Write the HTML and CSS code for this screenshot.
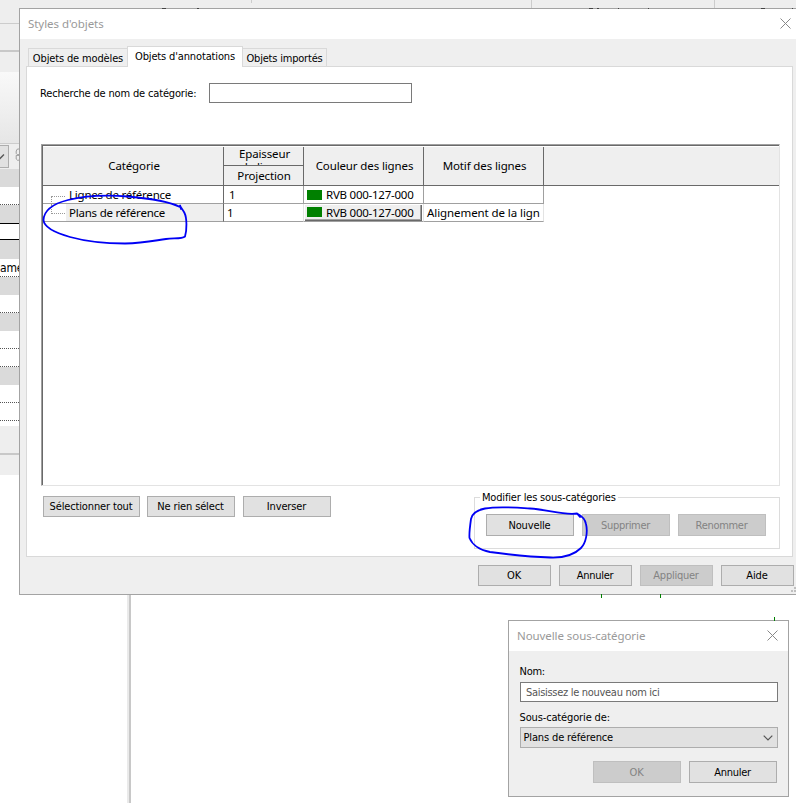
FILE: index.html
```html
<!DOCTYPE html>
<html lang="fr">
<head>
<meta charset="utf-8">
<title>Styles d'objets</title>
<link rel="stylesheet" href="styles.css">
</head>
<body>
<div class="desktop">
  <div class="ribbon"><i class="sep s1"></i><i class="sep s2"></i><i class="sep s3"></i></div>
  <div class="palette">
    <div class="p-top"></div>
    <div class="p-bar"></div>
    <div class="p-preview"></div>
    <div class="p-type"><span class="p-drop"><svg width="8" height="22" viewBox="0 0 8 22"><path d="M-1 13.5l5-5" fill="none" stroke="#555" stroke-width="1.3"/></svg></span><svg class="p-icon" width="5" height="16" viewBox="0 0 5 16"><path d="M5 .5H3L1.500 3V6L3 7.500H5M5 8.500H1.500V13L3 14.500H5" fill="none" stroke="#8c8c8c"/></svg></div>
    <div class="p-row head"></div>
    <div class="p-row dot"></div>
    <div class="p-row head"></div>
    <div class="p-row focus"></div>
    <div class="p-row head tall"></div>
    <div class="p-row dot">amé</div>
    <div class="p-row head"></div>
    <div class="p-row dot"></div>
    <div class="p-row head"></div>
    <div class="p-row dot"></div>
    <div class="p-row dot"></div>
    <div class="p-row head"></div>
    <div class="p-row dot"></div>
    <div class="p-row dot"></div>
    <div class="p-row gap"></div>
    <div class="p-foot"></div>
    <div class="p-end"></div>
  </div>
  <div class="divider"></div>
  <i class="tick k1"></i><i class="tick k2"></i><i class="tick k3"></i>

  <section class="window main">
    <header class="titlebar"><span class="tt1">Styles d'objets</span>
      <svg class="close" width="11" height="11" viewBox="0 0 11 11"><path d="M.5.5l10 10M10.500.5l-10 10" fill="none" stroke="#888"/></svg></header>
    <div class="tabs">
      <div class="tab first">Objets de modèles</div>
      <div class="tab active">Objets d'annotations</div>
      <div class="tab third">Objets importés</div>
    </div>
    <div class="panel">
      <div class="search"><label>Recherche de nom de catégorie:</label><div class="field"></div></div>
      <div class="grid">
        <div class="ghead">
          <div class="gh c1">Catégorie</div>
          <div class="gsplit c2"><div class="gtop">Epaisseur<br><span class="clip">de lignes</span></div><div class="gbot">Projection</div></div>
          <div class="gh c3">Couleur des lignes</div>
          <div class="gh c4">Motif des lignes</div>
          <div class="rest"></div>
        </div>
        <div class="grow">
          <div class="cell c1"><i class="branch top"></i><span class="name">Lignes de référence</span></div>
          <div class="cell c2 num">1</div>
          <div class="cell c3"><span class="color"><i></i>RVB 000-127-000</span></div>
          <div class="cell c4"></div>
        </div>
        <div class="grow sel">
          <div class="cell c1"><i class="branch"></i><span class="name">Plans de référence</span></div>
          <div class="cell c2 num">1</div>
          <div class="cell c3"><span class="color raised"><i></i>RVB 000-127-000</span></div>
          <div class="cell c4 motif">Alignement de la lign</div>
        </div>
      </div>
      <div class="actions">
        <div class="btn wide">Sélectionner tout</div>
        <div class="btn n">Ne rien sélect</div>
        <div class="btn n inv">Inverser</div>
        <fieldset class="group"><legend>Modifier les sous-catégories</legend>
          <div class="btn n tall">Nouvelle</div>
          <div class="btn n tall off t3">Supprimer</div>
          <div class="btn n tall off t3">Renommer</div>
        </fieldset>
      </div>
    </div>
    <footer class="foot">
      <div class="btn">OK</div>
      <div class="btn t2">Annuler</div>
      <div class="btn off t2">Appliquer</div>
      <div class="btn">Aide</div>
    </footer>
    <svg class="grip" width="6" height="6" viewBox="0 0 6 6"><path d="M4 0h2v2h-2zM1 3h2v2h-2zM4 3h2v2h-2z" fill="#bfbfbf"/></svg>
  </section>
  <svg class="ink" width="796" height="12" viewBox="0 0 796 12"><path d="M162 8.500h4M197 8.500h2M589 8.500h4M597 8.500h2M618 8.500h1M648 8.500h1M761 8.500h4M792 8.500h1" stroke="#444" fill="none"/></svg>

  <svg class="ink" width="600" height="390" viewBox="0 0 600 390">
    <path d="M180 207C168 201 145 198 128 196.500C108 195 86 195.500 68 200C52 204 44 211 43.500 220C44 228 56 233 70 237C88 242 105 243.500 125 243.500C143 243 152 241 166 239C174 238 182 239 185 236.500C187 230 187 218 184.500 213C183 210 181 208 180 205.500L181 209" fill="none" stroke="#0000f5" stroke-width="1.8" stroke-linecap="round" stroke-linejoin="round"/>
  </svg>
  <svg class="ink low" width="140" height="70" viewBox="460 495 140 70">
    <path d="M577 513.500C563 515.500 548 509.500 530 508.500C516 507.500 498 506 485 508.500C477 510 472 514 471 519C470 526 469 533 469.500 538C472 544 479 550 490 552C512 555 530 557 550 557.500C562 558 574 555 581 548C586 543 588 532 586 524C585 519 582 516 577 513.500L580 517" fill="none" stroke="#0000f5" stroke-width="1.8" stroke-linecap="round" stroke-linejoin="round"/>
  </svg>

  <section class="window sub">
    <header class="titlebar"><span class="tt2">Nouvelle sous-catégorie</span>
      <svg class="close" width="11" height="11" viewBox="0 0 11 11"><path d="M.5.5l10 10M10.500.5l-10 10" fill="none" stroke="#888"/></svg></header>
    <div class="form">
      <label class="t2">Nom:</label>
      <div class="field t3">Saisissez le nouveau nom ici</div>
      <label>Sous-catégorie de:</label>
      <div class="select">Plans de référence<svg width="10" height="6" viewBox="0 0 10 6"><path d="M.7.7L5 5 9.300.7" fill="none" stroke="#555" stroke-width="1.2"/></svg></div>
      <div class="buttons"><div class="btn n tall off">OK</div><div class="btn n tall t2">Annuler</div></div>
    </div>
  </section>
</div>
</body>
</html>
```
FILE: styles.css
```css
* { box-sizing: border-box; }
body { margin: 0; background: #fff; color: #000; font: 11px/14px "DejaVu Sans Condensed", "Liberation Sans", sans-serif; letter-spacing: -.14px; }
.desktop { position: relative; width: 796px; height: 803px; overflow: hidden; white-space: nowrap; }

/* application behind the dialogs */
.ribbon { position: absolute; left: 0; top: 0; width: 796px; height: 9px; background: #eee; }
.sep { position: absolute; top: 0; width: 1px; height: 8px; background: #ccc; }
.s1 { left: 251px; height: 3px; }
.s2 { left: 531px; }
.s3 { left: 714px; }
.palette { position: absolute; left: 0; top: 0; width: 19px; }
.p-top { height: 51px; background: linear-gradient(#eee 23px, #ccc 23px, #ccc 24px, #eee 24px, #eee 50px, #c8c8c8 50px); }
.p-bar { height: 21px; background: linear-gradient(#c8c8c8 1px, #eee 1px); }
.p-preview { height: 72px; background: linear-gradient(#f9f9f9, #e6e6e6); border-bottom: 1px solid #ccc; }
.p-type { display: flex; height: 25px; padding-top: 1px; gap: 6px; background: #eee; }
.p-drop { width: 9px; height: 23px; background: #e1e1e1; border: 1px solid #adadad; border-left: 0; }
.p-drop svg { display: block; }
.p-icon { margin-top: 2px; width: 4px; }
.p-row { height: 18px; }
.p-row.head { background: #dadada; }
.p-row.head.tall { height: 19px; }
.p-row.dot { padding-top: 2px; font-size: 12px; background: repeating-linear-gradient(90deg, #555 0 1px, #fff 1px 2px) bottom / 100% 1px no-repeat; }
.p-row.focus { height: 17px; border: solid #000; border-width: 1px 0; }
.p-row.gap { height: 5px; }
.p-foot { height: 29px; background: #eee; border-bottom: 2px solid #c8c8c8; }
.p-end { height: 20px; background: #eee; }
.divider { position: absolute; left: 127px; top: 595px; width: 4px; height: 208px; border-left: 2px solid #eaeaea; background: #c8c8c8; }
.tick { position: absolute; width: 1px; height: 4px; background: #008000; z-index: 1; }
.k1 { left: 601px; top: 594px; }
.k2 { left: 660px; top: 594px; }
.k3 { left: 774px; top: 617px; }

/* shared window parts */
.window { position: absolute; background: #efefef; border: 1px solid #a3a3a3; }
.titlebar { display: flex; justify-content: space-between; height: 30px; background: #fff; color: #999; font: 11.5px/30px "Noto Sans", sans-serif; letter-spacing: -.05px; }
.close { margin-top: 9px; }
.btn { display: flex; align-items: center; justify-content: center; height: 21px; padding: 1px 1px 0 0; background: #e1e1e1; border: 1px solid #adadad; flex: none; }
.btn.n { width: 88px; }
.btn.tall { height: 22px; padding-top: 2px; }
.btn.off { background: #ccc; border-color: #bfbfbf; color: #838383; }
.t2 { letter-spacing: -.25px; }
.t3 { letter-spacing: -.3px; }

/* main dialog */
.main { left: 19px; top: 8px; width: 790px; height: 587px; }
.main .titlebar { width: 777px; padding: 0 6px 0 8px; }
.tabs { display: flex; align-items: flex-end; height: 27px; margin-left: 8px; position: relative; }
.tab { height: 18px; border: 1px solid #d9d9d9; border-bottom: 0; line-height: 20px; text-align: center; }
.tab.first { width: 99px; border-right: 0; }
.tab.active { width: 116px; height: 21px; line-height: 19px; background: #fff; margin-bottom: -1px; }
.tab.third { width: 84px; border-left: 0; letter-spacing: -.2px; }
.panel { width: 767px; height: 491px; margin-left: 6px; background: #fff; border: 1px solid #d9d9d9; }
.search { display: flex; height: 20px; margin: 16px 0 0 13px; letter-spacing: -.16px; }
.search label { width: 169px; padding-top: 4px; }
.search .field { width: 203px; height: 20px; border: 1px solid #7a7a7a; }

.grid { width: 739px; height: 342px; margin: 41px 0 0 14px; border: 1px solid #a0a0a0; border-right-color: #e3e3e3; border-bottom-color: #e3e3e3; box-shadow: inset 1px 1px #696969; padding: 2px 0 0 1px; font: 11.5px/14px "Noto Sans", sans-serif; letter-spacing: -.12px; }
.ghead { display: flex; height: 40px; margin-top: -1px; padding-top: 1px; }
.ghead > div { background: #efefef; border-bottom: 1px solid #696969; border-right: 1px solid #696969; }
.ghead > .rest { flex: 1; border-right: 0; }
.c1 { width: 181px; }
.c2 { width: 80px; }
.c3, .c4 { width: 120px; }
.gh { display: flex; align-items: center; justify-content: center; padding: 0 0 1px 2px; }
.gsplit { text-align: center; padding-left: 1px; }
.gtop { height: 19px; margin-left: -1px; padding-left: 2px; overflow: hidden; border-bottom: 1px solid #696969; line-height: 14px; }
.clip { position: relative; top: -1px; }
.gbot { line-height: 20px; }
.grow { display: flex; height: 18px; }
.cell { display: flex; align-items: center; border: solid #a0a0a0; border-width: 0 1px 1px 0; overflow: hidden; }
.grow .c1 { padding-left: 8px; border-right-color: #696969; }
.branch { width: 15px; height: 8px; margin-top: 10px; border-left: 1px dotted #999; background: repeating-linear-gradient(90deg, #999 0 1px, #fff 1px 2px) 0 0 / 100% 1px no-repeat; flex: none; }
.sel .branch { height: 10px; margin: 0 0 7px; background-position: 0 9px; }
.name { flex: 1; padding-left: 3px; line-height: 17px; letter-spacing: -.22px; }
.sel .name { background: #efefef; }
.num { padding-left: 5px; }
.sel .num { padding-left: 3px; }
.color { display: flex; align-items: center; width: 117px; height: 17px; margin-left: 1px; padding-left: 2px; letter-spacing: -.24px; }
.color i { width: 15px; height: 10px; margin-right: 4px; background: #008000; }
.raised { background: #efefef; border: solid #696969; border-width: 0 1px 1px 0; height: 16px; padding-top: 1px; box-shadow: inset -1px -1px #a0a0a0; }
.raised i { margin-top: -2px; }
.sel .cell { border-right-color: #e3e3e3; }
.sel .c1 { border-right-color: #696969; }
.motif { padding-left: 3px; letter-spacing: -.08px; }

.actions { display: flex; align-items: flex-start; margin: 10px 0 0 16px; }
.btn.wide { width: 97px; margin-right: 7px; }
.btn.inv { margin-left: 8px; }
.group { display: flex; gap: 8px; width: 306px; height: 59px; margin: -6px 0 0 143px; padding: 10px 0 0 11px; border: 1px solid #dcdcdc; }
.group legend { height: 14px; margin-left: -6px; padding: 0 2px; line-height: 16px; letter-spacing: -.17px; }
.foot { display: flex; gap: 8px; margin: 8px 0 0 458px; }
.foot .btn { width: 73px; }
.grip { position: absolute; left: 770px; top: 578px; }
.ink { position: absolute; left: 0; top: 0; }
.ink.low { left: 460px; top: 495px; }

/* new subcategory dialog */
.sub { left: 508px; top: 620px; width: 281px; height: 177px; }
.sub .titlebar { padding: 0 10px 0 8px; letter-spacing: -.08px; }
.form { display: flex; flex-direction: column; padding: 13px 10px 0 11px; }
.form label { height: 14px; line-height: 16px; margin-left: -.5px; }
.form .field { height: 20px; margin: 4px 0 8px; padding-left: 5px; border: 1px solid #7a7a7a; background: #fff; color: #555; line-height: 19px; }
.select { display: flex; align-items: center; justify-content: space-between; height: 21px; margin-top: 3px; padding: 1px 4px 0 2.5px; border: 1px solid #adadad; background: #e1e1e1; }
.buttons { display: flex; justify-content: flex-end; gap: 8px; margin: 13px 1px 0 0; }
```
